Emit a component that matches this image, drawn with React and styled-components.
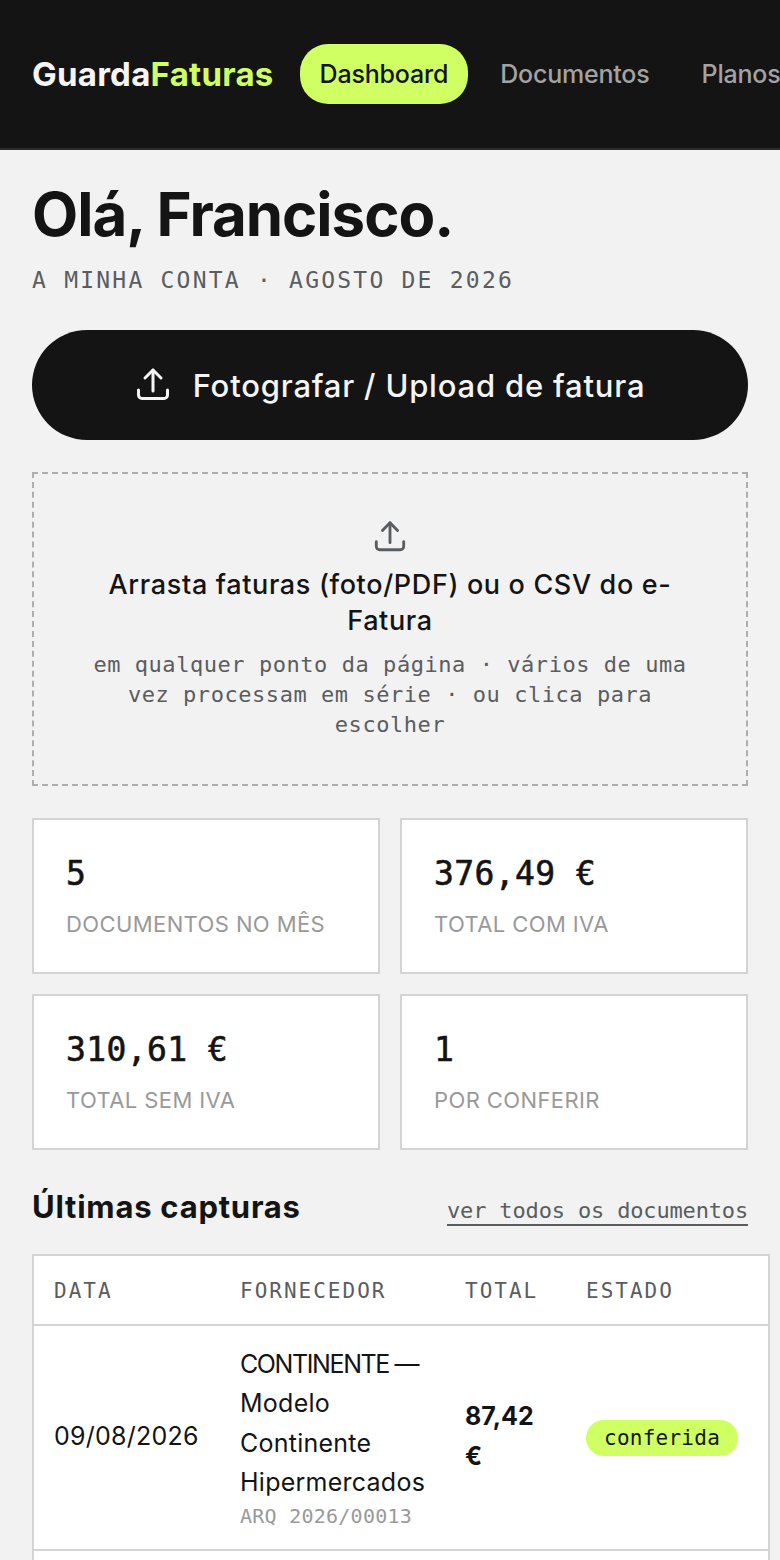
import React from "react";
import styled, { createGlobalStyle } from "styled-components";

const SANS = `"Inter", "Liberation Sans", sans-serif`;
const MONO = `"DejaVu Sans Mono", "Liberation Mono", monospace`;

const GlobalStyle = createGlobalStyle`
  html, body {
    margin: 0;
    padding: 0;
    height: 1560px;
    overflow: hidden;
    background: #f2f2f2;
    color: #141414;
    font-family: ${SANS};
  }
  * {
    box-sizing: border-box;
  }
`;

const Header = styled.header`
  display: flex;
  align-items: center;
  gap: 26px;
  height: 150px;
  padding-left: 32px;
  background: #141414;
  border-bottom: 2px solid #2a2d30;
  white-space: nowrap;
  overflow: hidden;
`;

const Logo = styled.div`
  font-size: 33px;
  font-weight: 700;
  letter-spacing: 0.25px;
  color: #f5f5f5;

  span {
    color: #cfff62;
  }
`;

const Nav = styled.nav`
  display: flex;
  gap: 12px;
`;

const NavLink = styled.a`
  display: block;
  height: 60px;
  padding: 0 20px;
  border-radius: 28px;
  font-size: 25px;
  font-weight: 500;
  line-height: 60px;
  letter-spacing: -0.2px;
  color: ${(p) => (p.$active ? "#141414" : "#a3a3a3")};
  background: ${(p) => (p.$active ? "#cfff62" : "transparent")};
`;

const Main = styled.main`
  padding: 28px 32px 0;
`;

const Title = styled.h1`
  margin: 0;
  font-size: 60px;
  font-weight: 700;
  line-height: 72px;
  letter-spacing: -1.05px;
`;

const Subtitle = styled.p`
  margin: 14px 0 0;
  font-family: ${MONO};
  font-size: 23px;
  line-height: 32px;
  letter-spacing: 2.22px;
  color: #5a5d60;
`;

const UploadButton = styled.button`
  display: flex;
  align-items: center;
  justify-content: center;
  gap: 22px;
  width: 100%;
  height: 110px;
  margin-top: 34px;
  border: 0;
  border-radius: 55px;
  background: #141414;
  color: #f5f5f5;
  font-family: ${SANS};
  font-size: 31px;
  font-weight: 500;
  letter-spacing: 0.8px;
`;

const DropZone = styled.div`
  display: flex;
  flex-direction: column;
  align-items: center;
  height: 314px;
  margin-top: 32px;
  padding: 46px 46px 0;
  border: 2px dashed #aeaeae;
  text-align: center;
`;

const DropTitle = styled.div`
  margin-top: 13px;
  font-size: 27px;
  font-weight: 500;
  line-height: 36px;
  letter-spacing: 0.65px;
`;

const DropHint = styled.div`
  margin-top: 11px;
  font-family: ${MONO};
  font-size: 22px;
  line-height: 30px;
  letter-spacing: 0.55px;
  color: #5a5d60;
`;

const Stats = styled.div`
  display: grid;
  grid-template-columns: 1fr 1fr;
  gap: 20px;
  margin-top: 32px;
`;

const StatCard = styled.div`
  height: 156px;
  padding: 34px 32px 0;
  background: #fff;
  border: 2px solid #d4d4d4;
`;

const StatValue = styled.div`
  font-family: ${MONO};
  font-size: 33px;
  font-weight: 400;
  line-height: 40px;
  letter-spacing: 0.4px;
  -webkit-text-stroke: 0.6px #141414;
`;

const StatLabel = styled.div`
  margin-top: 15px;
  font-size: 22px;
  line-height: 30px;
  letter-spacing: 0.4px;
  color: #999;
`;

const SectionHead = styled.div`
  display: flex;
  align-items: flex-end;
  justify-content: space-between;
  margin-top: 36px;
`;

const SectionTitle = styled.h2`
  margin: 0;
  font-size: 31px;
  font-weight: 700;
  line-height: 42px;
  letter-spacing: 0.76px;
`;

const SeeAll = styled.a`
  margin-bottom: 2px;
  font-family: ${MONO};
  font-size: 22px;
  line-height: 26px;
  letter-spacing: -0.16px;
  color: #5a5d60;
  border-bottom: 2px solid #5a5d60;
`;

const TableWrap = styled.div`
  width: 738px;
  margin-top: 26px;
  background: #fff;
  border: 2px solid #d4d4d4;
`;

const Table = styled.table`
  width: 734px;
  table-layout: fixed;
  border-collapse: collapse;
`;

const Th = styled.th`
  width: ${(p) => p.$w}px;
  height: 69px;
  padding: 2px 0 0 20px;
  border-bottom: 2px solid #d4d4d4;
  text-align: left;
  font-family: ${MONO};
  font-size: 21px;
  font-weight: 400;
  letter-spacing: 2px;
  color: #5a5d60;
`;

const Td = styled.td`
  padding: 19px 20px 20px;
  border-bottom: 2px solid #d4d4d4;
  font-size: 25px;
  line-height: 39.4px;
  letter-spacing: 0.25px;
`;

const SupplierHead = styled.div`
  letter-spacing: -1.4px;
  white-space: nowrap;
`;

const DateText = styled.span`
  white-space: nowrap;
`;

const Amount = styled.span`
  font-weight: 700;
  letter-spacing: 0;
`;

const Ref = styled.div`
  font-family: ${MONO};
  font-size: 20px;
  line-height: 26px;
  letter-spacing: 0.25px;
  color: #999;
  white-space: nowrap;
`;

const Badge = styled.span`
  display: inline-block;
  height: 36px;
  padding: 0 18px;
  border-radius: 18px;
  background: #cfff62;
  font-family: ${MONO};
  font-size: 21px;
  line-height: 36px;
  letter-spacing: 0.25px;
  vertical-align: middle;
`;

const UploadIcon = ({ size }) => (
  <svg width={size} height={size} viewBox="0 0 36 36" fill="none" stroke="currentColor" strokeWidth="3" strokeLinecap="round" strokeLinejoin="round">
    <path d="M18 24V3" />
    <path d="M10 11l8-8 8 8" />
    <path d="M3.5 23v5a3.5 3.5 0 0 0 3.5 3.5h22a3.5 3.5 0 0 0 3.5-3.5v-5" />
  </svg>
);

const DropIcon = styled.span`
  display: flex;
  color: #5a5d60;
`;

const stats = [
  ["5", "DOCUMENTOS NO MÊS"],
  ["376,49 €", "TOTAL COM IVA"],
  ["310,61 €", "TOTAL SEM IVA"],
  ["1", "POR CONFERIR"],
];

export default function App() {
  return (
    <>
      <GlobalStyle />
      <Header>
        <Logo>
          Guarda<span>Faturas</span>
        </Logo>
        <Nav>
          <NavLink $active>Dashboard</NavLink>
          <NavLink>Documentos</NavLink>
          <NavLink>Planos</NavLink>
        </Nav>
      </Header>
      <Main>
        <Title>Olá, Francisco.</Title>
        <Subtitle>A MINHA CONTA · AGOSTO DE 2026</Subtitle>
        <UploadButton>
          <UploadIcon size={36} />
          Fotografar / Upload de fatura
        </UploadButton>
        <DropZone>
          <DropIcon>
            <UploadIcon size={34} />
          </DropIcon>
          <DropTitle>Arrasta faturas (foto/PDF) ou o CSV do e-Fatura</DropTitle>
          <DropHint>em qualquer ponto da página · vários de uma vez processam em série · ou clica para escolher</DropHint>
        </DropZone>
        <Stats>
          {stats.map(([value, label]) => (
            <StatCard key={label}>
              <StatValue>{value}</StatValue>
              <StatLabel>{label}</StatLabel>
            </StatCard>
          ))}
        </Stats>
        <SectionHead>
          <SectionTitle>Últimas capturas</SectionTitle>
          <SeeAll>ver todos os documentos</SeeAll>
        </SectionHead>
        <TableWrap>
          <Table>
            <thead>
              <tr>
                <Th $w={186}>DATA</Th>
                <Th $w={225}>FORNECEDOR</Th>
                <Th $w={121}>TOTAL</Th>
                <Th $w={202}>ESTADO</Th>
              </tr>
            </thead>
            <tbody>
              <tr>
                <Td>
                  <DateText>09/08/2026</DateText>
                </Td>
                <Td>
                  <SupplierHead>CONTINENTE —</SupplierHead>
                  Modelo Continente Hipermercados
                  <Ref>ARQ 2026/00013</Ref>
                </Td>
                <Td>
                  <Amount>87,42 €</Amount>
                </Td>
                <Td>
                  <Badge>conferida</Badge>
                </Td>
              </tr>
              <tr>
                <Td colSpan={4} />
              </tr>
            </tbody>
          </Table>
        </TableWrap>
      </Main>
    </>
  );
}
